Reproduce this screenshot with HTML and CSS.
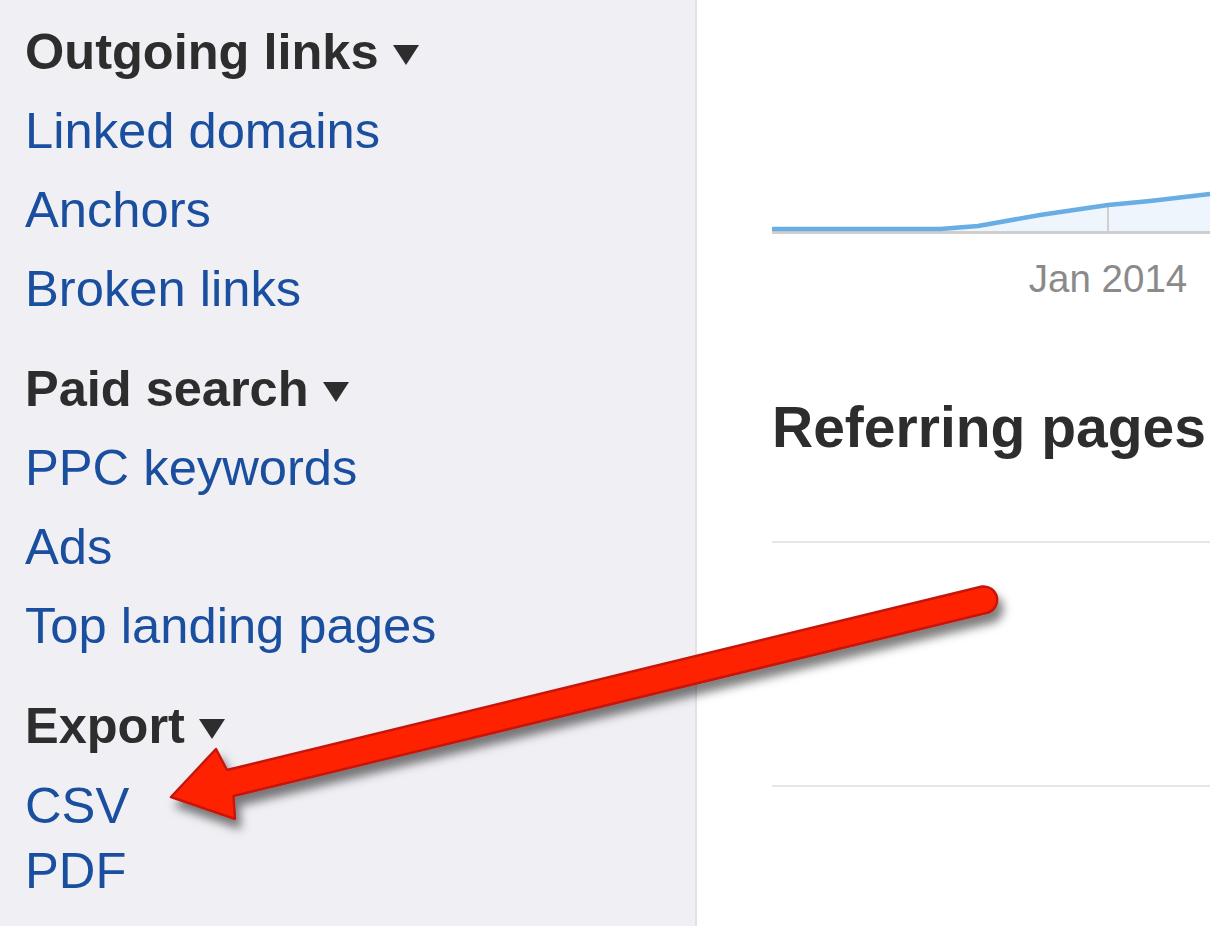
FILE: index.html
```html
<!DOCTYPE html>
<html lang="en">
<head>
    <title>Backlinks</title>
    <link rel="stylesheet" href="styles.css">
</head>
<body>
    <div class="page">
        <!-- Left menu -->
        <div class="sidebar">
            <div class="menu-section">
                <div class="menu-title">Outgoing links <span class="caret"></span></div>
                <a class="menu-link" href="#">Linked domains</a>
                <a class="menu-link" href="#">Anchors</a>
                <a class="menu-link" href="#">Broken links</a>
            </div>
            <div class="menu-section">
                <div class="menu-title">Paid search <span class="caret"></span></div>
                <a class="menu-link" href="#">PPC keywords</a>
                <a class="menu-link" href="#">Ads</a>
                <a class="menu-link" href="#">Top landing pages</a>
            </div>
            <div class="menu-section">
                <div class="menu-title">Export <span class="caret"></span></div>
                <div class="export-list">
                    <a class="menu-link" href="#">CSV</a>
                    <a class="menu-link" href="#">PDF</a>
                </div>
            </div>
        </div>

        <!-- Main content -->
        <div class="main">
            <svg class="chart" width="450" height="160" viewBox="0 0 450 160">
                <polygon class="chart-area" points="0,79 168,79 206,76 268,65 336,55 378,51 438,44 438,82 0,82"></polygon>
                <line class="chart-tick" x1="336" y1="55" x2="336" y2="82"></line>
                <line class="chart-axis" x1="0" y1="82.5" x2="438" y2="82.5"></line>
                <polyline class="chart-line" points="0,79 168,79 206,76 268,65 336,55 378,51 438,44"></polyline>
                <text class="chart-label" x="336" y="142" text-anchor="middle">Jan 2014</text>
            </svg>

            <h2 class="section-title">Referring pages</h2>

            <div class="table-row"></div>
            <div class="table-row"></div>
        </div>
    </div>

    <!-- Annotation arrow drawn over the screenshot -->
    <svg class="annotation" width="1222" height="926" viewBox="0 0 1222 926">
        <defs>
            <filter id="arrowShadow" x="-10%" y="-30%" width="130%" height="180%">
                <feDropShadow dx="5" dy="9" stdDeviation="5" flood-color="#000" flood-opacity="0.5"></feDropShadow>
            </filter>
        </defs>
        <path class="arrow" filter="url(#arrowShadow)"
              d="M171,797 L216,749 L227,770 L982,586.5 A13.5,13.5 0 0 1 988.5,612.5 L233.5,796 L235,819 Z"></path>
    </svg>
</body>
</html>
```

FILE: styles.css
```css
body {
    font-family: "Liberation Sans", Arial, Helvetica, sans-serif;
    background-color: #fff;
    margin: 0;
    padding: 0;
}

.page {
    display: flex;
    height: 926px;
    overflow: hidden;
}

.sidebar {
    width: 670px;
    padding: 12px 0 0 25px;
    background-color: #efeff4;
    border-right: 2px solid #e1e1e6;
}

.menu-section + .menu-section {
    margin-top: 21px;
}

.menu-title {
    font-size: 50.5px;
    line-height: 79px;
    font-weight: bold;
    color: #2d2d2d;
}

.caret {
    display: inline-block;
    width: 0;
    height: 0;
    border-left: 13px solid transparent;
    border-right: 13px solid transparent;
    border-top: 20px solid #2d2d2d;
    vertical-align: 4px;
}

.menu-link {
    display: block;
    font-size: 50.7px;
    line-height: 79px;
    color: #1a4e9f;
    text-decoration: none;
}

.export-list {
    margin-top: 8px;
}

.export-list .menu-link {
    line-height: 65px;
}

.main {
    flex: 1;
    padding: 150px 0 0 75px;
}

.chart {
    display: block;
}

.chart-area {
    fill: #eef5fc;
}

.chart-line {
    fill: none;
    stroke: #68ade4;
    stroke-width: 4.5;
    stroke-linejoin: round;
}

.chart-axis {
    stroke: #cfcfcf;
    stroke-width: 3;
}

.chart-tick {
    stroke: #cfcfcf;
    stroke-width: 2;
}

.chart-label {
    font-family: "Liberation Sans", Arial, Helvetica, sans-serif;
    font-size: 38.5px;
    fill: #8a8a8a;
}

.section-title {
    margin: 84px 0 0 0;
    font-size: 57px;
    line-height: 66px;
    font-weight: bold;
    color: #2d2d2d;
    white-space: nowrap;
}

.table-row {
    width: 438px;
    height: 242px;
    border-top: 2px solid #e6e6e6;
}

.table-row:first-of-type {
    margin-top: 81px;
}

.annotation {
    position: absolute;
    left: 0;
    top: 0;
    pointer-events: none;
}

.arrow {
    fill: #ff2300;
    stroke: #c4160a;
    stroke-width: 2.5;
    stroke-linejoin: round;
}
```
